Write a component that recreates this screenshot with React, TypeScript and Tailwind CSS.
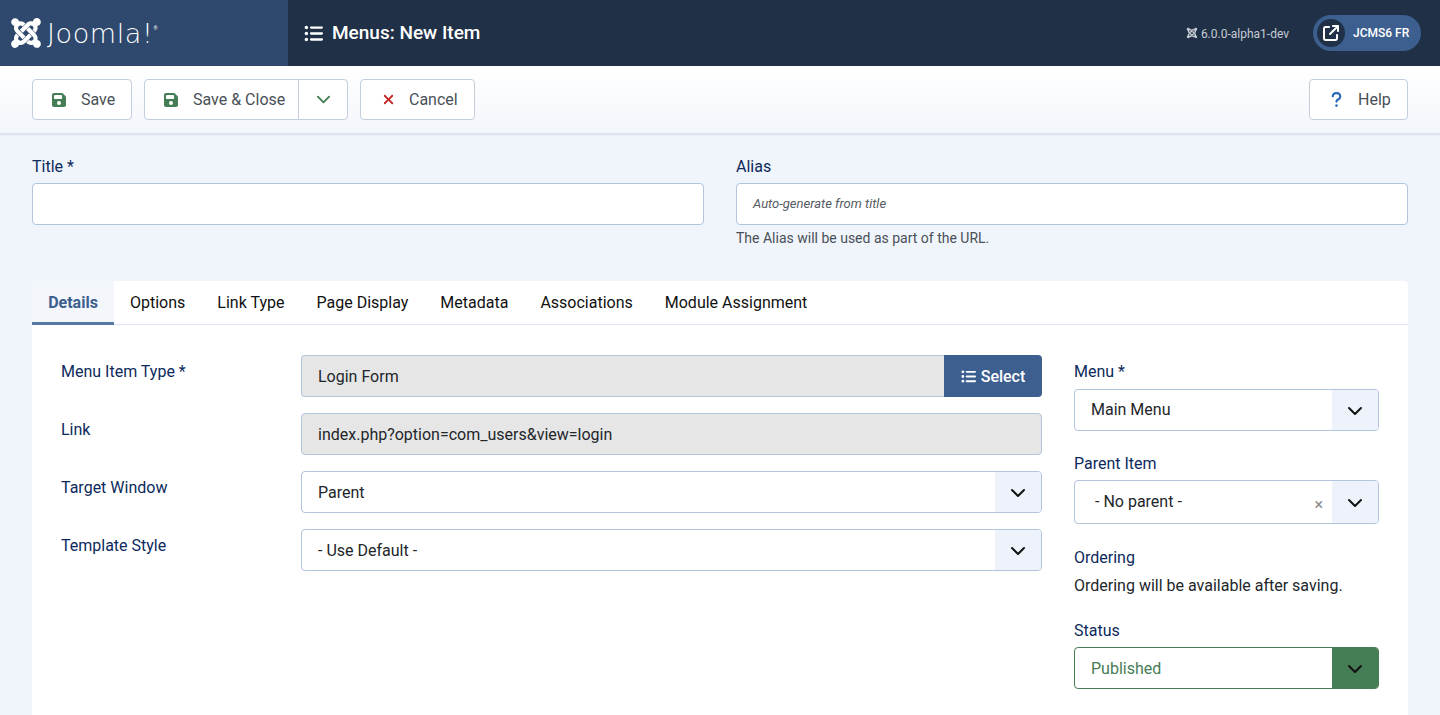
import React from 'react';
import { FaJoomla } from 'react-icons/fa';
import { FaFloppyDisk, FaXmark, FaQuestion, FaListUl, FaArrowUpRightFromSquare } from 'react-icons/fa6';

const TABS = ['Options', 'Link Type', 'Page Display', 'Metadata', 'Associations', 'Module Assignment'];

const Chevron = ({ className }: { className: string }) => (
  <svg viewBox="0 0 16 16" className={className} fill="none" stroke="currentColor" strokeWidth="2" strokeLinecap="round" strokeLinejoin="round">
    <path d="M2 5l6 6 6-6" />
  </svg>
);

// ── Native-looking select with a tinted arrow block ──
const SelectBox = ({ value, textClass = 'leading-[42px]' }: { value: string; textClass?: string }) => (
  <div className="flex h-[42px] items-stretch rounded border border-[#b2c5de] bg-white overflow-hidden">
    <div className={`flex-1 pl-4 text-[#22262a] ${textClass}`}>{value}</div>
    <div className="flex w-[46px] items-center justify-center bg-[#eef3fb] text-[#111]">
      <Chevron className="w-4 h-4 mt-[1px]" />
    </div>
  </div>
);

const ToolbarButton = ({ icon, label, className }: { icon: React.ReactNode; label: string; className: string }) => (
  <button className={`flex h-[41px] items-center rounded border border-[#c3cedd] bg-white text-[#495057] ${className}`}>
    {icon}
    <span>{label}</span>
  </button>
);

const FormRow = ({ label, children }: { label: string; children: React.ReactNode }) => (
  <div className="flex">
    <div className="w-[240px] pt-[5px] text-[#0c2a5c] leading-[24px]">{label}</div>
    <div className="flex-1">{children}</div>
  </div>
);

export default function App() {
  return (
    <div className="h-[715px] overflow-hidden bg-[#f0f4fb] text-base" style={{ fontFamily: 'Roboto, sans-serif' }}>
      {/* Header */}
      <header className="flex h-[66px] bg-[#1f3047] text-white">
        <div className="flex w-[288px] items-center bg-[#2e496d] pl-[9px]">
          <FaJoomla className="w-[34px] h-[34px]" />
          <span className="ml-[4px] text-[27px] leading-none tracking-[0.6px]" style={{ fontFamily: '"DejaVu Sans", sans-serif', fontWeight: 200 }}>Joomla!</span>
          <span className="text-[5px] self-start mt-[25px]">®</span>
        </div>
        <div className="flex flex-1 items-center pl-[16px]">
          <FaListUl className="w-[19px] h-[19px]" />
          <h1 className="ml-[9px] text-[19px] font-medium">Menus: New Item</h1>
        </div>
        <div className="flex items-center pr-[19px]">
          <FaJoomla className="w-[12px] h-[12px] text-[#c6ccd4]" />
          <span className="ml-[3px] mt-[1px] text-[12px] text-[#c6ccd4]">6.0.0-alpha1-dev</span>
          <div className="ml-[24px] flex h-[36px] w-[108px] items-center rounded-full bg-[#3d5f8f] pl-[4px]">
            <div className="flex h-[28px] w-[28px] items-center justify-center rounded-full bg-[#1f3047]">
              <FaArrowUpRightFromSquare className="w-[16px] h-[16px]" />
            </div>
            <span className="ml-[8px] text-[12px] font-medium">JCMS6 FR</span>
          </div>
        </div>
      </header>

      {/* Toolbar */}
      <div className="flex h-[67px] items-center justify-between bg-gradient-to-b from-white to-[#f3f6fc] px-[32px] shadow-[0_1px_3px_rgba(60,90,140,0.2)]">
        <div className="flex gap-[12px]">
          <ToolbarButton
            className="w-[100px] pl-[18px]"
            icon={<FaFloppyDisk className="w-[16px] h-[16px] text-[#457d54] mr-[14px]" />}
            label="Save"
          />
          <div className="flex h-[41px] w-[204px] rounded border border-[#c3cedd] bg-white text-[#495057]">
            <button className="flex w-[154px] items-center border-r border-[#c3cedd] pl-[18px]">
              <FaFloppyDisk className="w-[16px] h-[16px] text-[#457d54] mr-[14px]" />
              <span>Save &amp; Close</span>
            </button>
            <button className="flex flex-1 items-center justify-center text-[#457d54]">
              <Chevron className="w-[15px] h-[15px]" />
            </button>
          </div>
          <ToolbarButton
            className="w-[115px] pl-[20px]"
            icon={<FaXmark className="w-[15px] h-[15px] text-[#c52827] mr-[13px]" />}
            label="Cancel"
          />
        </div>
        <ToolbarButton
          className="w-[99px] pl-[20px]"
          icon={<FaQuestion className="w-[13px] h-[17px] text-[#2a69b8] mr-[15px]" />}
          label="Help"
        />
      </div>

      <main className="px-[32px]">
        {/* Title and alias */}
        <div className="grid grid-cols-2 gap-[32px] pt-[21px]">
          <div>
            <label className="block h-[29px] leading-[26px] text-[#0c2a5c]">Title *</label>
            <div className="h-[42px] rounded border border-[#b2c5de] bg-white" />
          </div>
          <div>
            <label className="block h-[29px] leading-[26px] text-[#0c2a5c]">Alias</label>
            <div className="h-[42px] rounded border border-[#b2c5de] bg-white pl-4 text-[13px] italic leading-[40px] text-[#555b62]">Auto-generate from title</div>
            <p className="mt-[3px] text-[14px] leading-[20px] text-[#495057]">The Alias will be used as part of the URL.</p>
          </div>
        </div>

        {/* Tabbed card */}
        <section className="mt-[33px] rounded-t bg-white">
          <nav className="flex h-[44px] border-b border-[#dfe5f0] text-[#111]">
            <div className="-mb-px flex h-[44px] w-[82px] items-center justify-center border-b-[3px] border-[#557aa6] bg-[#f3f6fa] pt-[3px] font-bold text-[#3d5f8f]">Details</div>
            {TABS.map((tab) => (
              <div key={tab} className="flex items-center px-4 pt-[1px]">{tab}</div>
            ))}
          </nav>

          <div className="flex pl-[29px] pr-[29px] pt-[30px]">
            {/* Main column */}
            <div className="flex w-[981px] flex-col gap-[16px]">
              <FormRow label="Menu Item Type *">
                <div className="flex h-[42px]">
                  <div className="flex-1 rounded-l border border-r-0 border-[#b2c5de] bg-[#e6e6e6] pl-4 leading-[42px] text-[#22262a]">Login Form</div>
                  <button className="flex w-[98px] items-center justify-center rounded-r bg-[#3d5f8f] pt-[1px] font-medium text-white">
                    <FaListUl className="w-[15px] h-[15px] mr-[5px]" />
                    Select
                  </button>
                </div>
              </FormRow>
              <FormRow label="Link">
                <div className="h-[42px] rounded border border-[#b2c5de] bg-[#e6e6e6] pl-4 leading-[42px] text-[#22262a]">index.php?option=com_users&amp;view=login</div>
              </FormRow>
              <FormRow label="Target Window">
                <SelectBox value="Parent" />
              </FormRow>
              <FormRow label="Template Style">
                <SelectBox value="- Use Default -" />
              </FormRow>
            </div>

            {/* Side column */}
            <div className="ml-[32px] flex-1">
              <label className="block h-[34px] leading-[34px] text-[#0c2a5c]">Menu *</label>
              <SelectBox value="Main Menu" textClass="leading-[40px]" />

              <label className="mt-[20px] block h-[29px] leading-[26px] text-[#0c2a5c]">Parent Item</label>
              <div className="relative flex h-[44px] items-stretch overflow-hidden rounded border border-[#b2c5de] bg-white">
                <div className="flex-1 pl-[20px] pt-[9px] leading-[24px] text-[#22262a]">- No parent -</div>
                <span className="absolute right-[55px] top-[14px] text-[16px] leading-[20px] text-[#888]">×</span>
                <div className="flex w-[46px] items-center justify-center bg-[#eef3fb] text-[#111]">
                  <Chevron className="w-4 h-4 mt-[1px]" />
                </div>
              </div>

              <div className="mt-[21px] h-[24px] leading-[26px] text-[#0c2a5c]">Ordering</div>
              <p className="mt-[4px] h-[24px] leading-[26px] text-[#22262a]">Ordering will be available after saving.</p>

              <label className="mt-[21px] block h-[29px] leading-[26px] text-[#0c2a5c]">Status</label>
              <div className="flex h-[42px] items-stretch overflow-hidden rounded border border-[#457d54] bg-white">
                <div className="flex-1 pl-4 leading-[42px] text-[#457d54]">Published</div>
                <div className="flex w-[46px] items-center justify-center bg-[#457d54] text-[#111]">
                  <Chevron className="w-4 h-4 mt-[1px]" />
                </div>
              </div>
              <div className="h-[40px]" />
            </div>
          </div>
        </section>
      </main>
    </div>
  );
}
